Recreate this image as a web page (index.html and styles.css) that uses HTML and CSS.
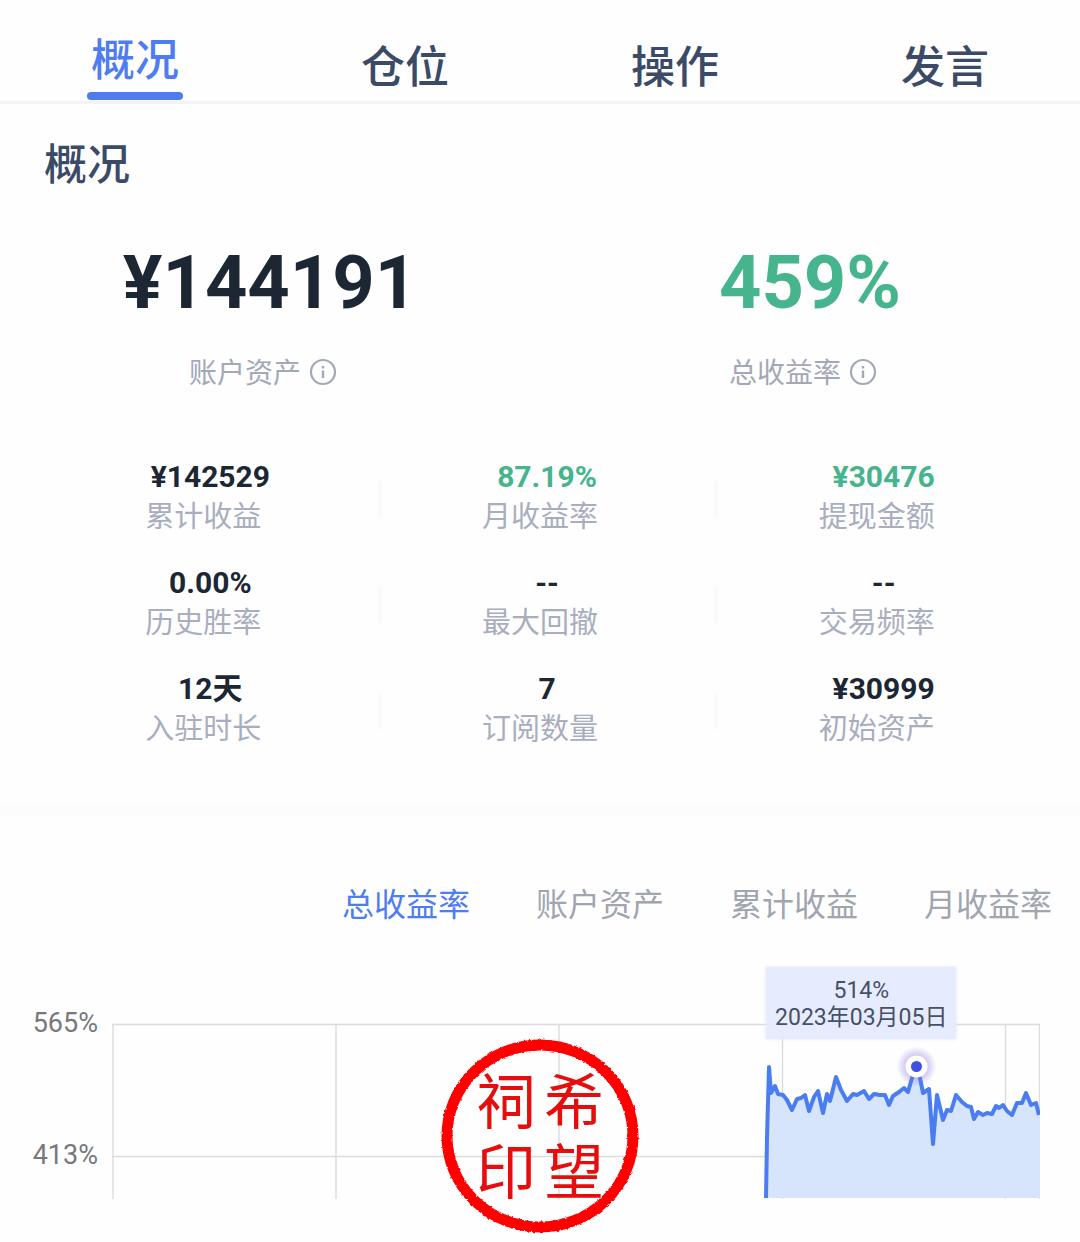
FILE: index.html
```html
<!DOCTYPE html>
<html lang="zh-CN">
<head>
    <meta charset="UTF-8">
    <meta name="viewport" content="width=device-width, initial-scale=1.0">
    <title>概况</title>
    <link rel="stylesheet" href="styles.css">
</head>
<body>
    <nav class="tabs">
        <button class="tab active" type="button">概况</button>
        <button class="tab" type="button">仓位</button>
        <button class="tab" type="button">操作</button>
        <button class="tab" type="button">发言</button>
    </nav>

    <section class="overview">
        <h1 class="title">概况</h1>

        <div class="summary">
            <div class="summary-item">
                <div class="summary-value">¥144191</div>
                <div class="summary-label">
                    账户资产
                    <svg class="info" viewBox="0 0 28 28">
                        <circle cx="14" cy="14" r="12" fill="none" stroke="currentColor" stroke-width="2.2"/>
                        <path d="M14 12.5v7.5M14 8v2.4" stroke="currentColor" stroke-width="2.4"/>
                    </svg>
                </div>
            </div>
            <div class="summary-item">
                <div class="summary-value green">459%</div>
                <div class="summary-label">
                    总收益率
                    <svg class="info" viewBox="0 0 28 28">
                        <circle cx="14" cy="14" r="12" fill="none" stroke="currentColor" stroke-width="2.2"/>
                        <path d="M14 12.5v7.5M14 8v2.4" stroke="currentColor" stroke-width="2.4"/>
                    </svg>
                </div>
            </div>
        </div>

        <div class="stats">
            <div class="stat">
                <div class="stat-value">¥142529</div>
                <div class="stat-label">累计收益</div>
            </div>
            <div class="stat">
                <div class="stat-value green">87.19%</div>
                <div class="stat-label">月收益率</div>
            </div>
            <div class="stat">
                <div class="stat-value green">¥30476</div>
                <div class="stat-label">提现金额</div>
            </div>
            <div class="stat">
                <div class="stat-value">0.00%</div>
                <div class="stat-label">历史胜率</div>
            </div>
            <div class="stat">
                <div class="stat-value">--</div>
                <div class="stat-label">最大回撤</div>
            </div>
            <div class="stat">
                <div class="stat-value">--</div>
                <div class="stat-label">交易频率</div>
            </div>
            <div class="stat">
                <div class="stat-value">12天</div>
                <div class="stat-label">入驻时长</div>
            </div>
            <div class="stat">
                <div class="stat-value">7</div>
                <div class="stat-label">订阅数量</div>
            </div>
            <div class="stat">
                <div class="stat-value">¥30999</div>
                <div class="stat-label">初始资产</div>
            </div>
        </div>
    </section>

    <section class="trend">
        <div class="chart-tabs">
            <button class="chart-tab active" type="button">总收益率</button>
            <button class="chart-tab" type="button">账户资产</button>
            <button class="chart-tab" type="button">累计收益</button>
            <button class="chart-tab" type="button">月收益率</button>
        </div>

        <div class="chart">
            <div class="axis">
                <span>565%</span>
                <span>413%</span>
            </div>
            <div class="plot">
                <svg class="plot-svg" viewBox="0 0 928 176">
                    <defs>
                        <radialGradient id="glow">
                            <stop offset="40%" stop-color="#8a6fe0" stop-opacity="0.5"/>
                            <stop offset="100%" stop-color="#8a6fe0" stop-opacity="0"/>
                        </radialGradient>
                    </defs>
                    <!-- grid -->
                    <path d="M0 1.5H928M0 133.5H928M1 1V176M224 1V176M447 1V176M670.5 1V176M893.5 1V176M927.5 1V176" fill="none" stroke="#dcdcdf" stroke-width="1.4"/>
                    <!-- area -->
                    <path fill="#d6e4fc" d="M654 175L655 114L657 44L659 70L663 63L666 71L671 72L675 77L680 87L685 76L689 75L693 72L697 88L702 74L706 68L711 90L715 71L718 78L724 54L729 67L735 78L741 71L745 72L752 68L757 76L762 71L768 72L773 72L777 82L781 73L787 69L792 65L796 69L800 55L804 44L808 55L811 70L817 66L821 121L825 72L831 97L835 87L839 88L844 72L850 79L855 83L859 84L862 96L866 89L871 92L875 90L880 91L884 83L887 85L891 82L895 88L900 92L905 80L910 80L914 70L919 82L924 80L928 92V175Z"/>
                    <!-- line -->
                    <path fill="none" stroke="#4a7df0" stroke-width="4" stroke-linejoin="round" d="M654 175L655 114L657 44L659 70L663 63L666 71L671 72L675 77L680 87L685 76L689 75L693 72L697 88L702 74L706 68L711 90L715 71L718 78L724 54L729 67L735 78L741 71L745 72L752 68L757 76L762 71L768 72L773 72L777 82L781 73L787 69L792 65L796 69L800 55L804 44L808 55L811 70L817 66L821 121L825 72L831 97L835 87L839 88L844 72L850 79L855 83L859 84L862 96L866 89L871 92L875 90L880 91L884 83L887 85L891 82L895 88L900 92L905 80L910 80L914 70L919 82L924 80L927 92"/>
                    <circle cx="804.5" cy="43.5" r="20" fill="url(#glow)"/>
                    <circle cx="804.5" cy="43.5" r="11" fill="#fff"/>
                    <circle cx="804.5" cy="43.5" r="5.5" fill="#4050e0"/>
                </svg>
                <div class="tooltip">514%<br>2023年03月05日</div>
            </div>

            <div class="stamp">
                <svg class="stamp-ring" viewBox="0 0 200 196">
                    <filter id="rough" x="-5%" y="-5%" width="110%" height="110%">
                        <feTurbulence type="fractalNoise" baseFrequency="0.3" numOctaves="2" seed="4"/>
                        <feDisplacementMap in="SourceGraphic" scale="3" xChannelSelector="R" yChannelSelector="G"/>
                    </filter>
                    <ellipse cx="100" cy="98" rx="93" ry="91" fill="none" stroke="#f00" stroke-width="11" filter="url(#rough)"/>
                </svg>
                <div class="stamp-text">
                    <span>祠</span><span>希</span>
                    <span>印</span><span>望</span>
                </div>
            </div>
        </div>
    </section>
</body>
</html>
```
FILE: styles.css
```css
* {
    box-sizing: border-box;
}
body {
    margin: 0;
    background: #fefefe;
    color: #1c2733;
    font-family: Roboto, "Noto Sans CJK SC", sans-serif;
}
button {
    padding: 0;
    border: none;
    background: none;
    font-family: inherit;
    cursor: pointer;
}

/* top tabs */
.tabs {
    display: grid;
    grid-template-columns: repeat(4, 1fr);
    align-items: end;
    height: 104px;
    border-bottom: 3px solid #f3f3f5;
}
.tab {
    position: relative;
    padding-bottom: 3px;
    color: #3b4a66;
    font-size: 44px;
    font-weight: 500;
    line-height: 60px;
}
.tab.active {
    padding-bottom: 10px;
    color: #4e7df2;
}
.tab.active::after {
    content: "";
    position: absolute;
    bottom: 1px;
    left: calc(50% - 48px);
    width: 96px;
    height: 8px;
    border-radius: 4px;
    background: #4e7df2;
}

/* overview */
.overview {
    padding-bottom: 56px;
    border-bottom: 12px solid #fcfcfc;
}
.title {
    margin: 0;
    padding: 31px 44px 0;
    color: #3b4a66;
    font-size: 43px;
    font-weight: 500;
    line-height: 60px;
}
.summary {
    display: grid;
    grid-template-columns: 1fr 1fr;
    padding-top: 43px;
    text-align: center;
}
.summary-value {
    font-size: 74px;
    font-weight: 700;
    line-height: 90px;
}
.summary-label {
    display: flex;
    align-items: center;
    justify-content: center;
    gap: 8px;
    padding: 26px 14px 0 0;
    color: #a3a8b8;
    font-size: 28px;
    line-height: 40px;
}
.info {
    width: 28px;
    height: 28px;
    margin-bottom: 4px;
}
.green {
    color: #46b48c;
}

.stats {
    display: grid;
    grid-template-columns: repeat(3, 1fr);
    row-gap: 26px;
    padding: 63px 28px 0 42px;
    text-align: center;
}
.stat {
    position: relative;
}
.stat:not(:nth-child(3n))::after {
    content: "";
    position: absolute;
    top: 24px;
    right: -3px;
    width: 4px;
    height: 36px;
    background: #f9f9fb;
}
.stat-value {
    font-size: 30px;
    font-weight: 700;
    line-height: 40px;
}
.stat-label {
    padding-right: 14px;
    color: #a9adc0;
    font-size: 29px;
    line-height: 40px;
}

/* trend chart */
.chart-tabs {
    display: flex;
    justify-content: flex-end;
    gap: 66px;
    padding: 64px 28px 0;
}
.chart-tab {
    color: #a0a5b0;
    font-size: 32px;
    line-height: 48px;
}
.chart-tab.active {
    color: #4e7df2;
}
.chart {
    position: relative;
    display: flex;
    gap: 14px;
    padding: 94px 40px 42px 32px;
}
.axis {
    display: flex;
    flex-direction: column;
    gap: 100px;
    width: 66px;
    margin-top: -16px;
    color: #77787d;
    font-size: 27px;
    line-height: 32px;
    text-align: right;
}
.plot {
    position: relative;
    flex: 1;
}
.plot-svg {
    display: block;
    width: 100%;
}
.tooltip {
    position: absolute;
    top: -56px;
    right: 9%;
    padding: 10px 9px 8px;
    background: rgba(228, 235, 253, 0.93);
    box-shadow: 0 0 4px #e4e6fb;
    color: #465066;
    font-size: 23px;
    line-height: 27px;
    text-align: center;
    white-space: nowrap;
}

/* seal over the chart */
.stamp {
    position: absolute;
    top: 109px;
    left: calc(50% - 100px);
    width: 200px;
    height: 196px;
}
.stamp-ring {
    display: block;
    width: 100%;
}
.stamp-text {
    position: absolute;
    inset: 31px 32px 25px;
    display: grid;
    grid-template-columns: 1fr 1fr;
    color: #e60d0d;
    font-size: 60px;
    font-weight: 400;
    line-height: 70px;
    text-align: center;
}
```
